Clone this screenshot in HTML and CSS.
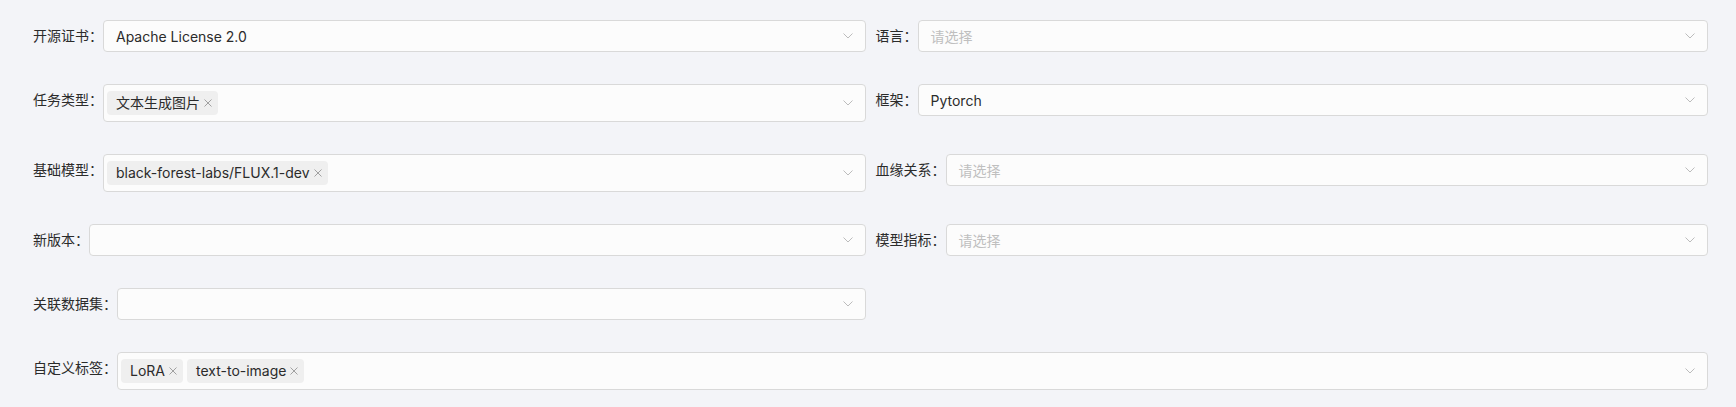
FILE: index.html
```html
<!DOCTYPE html>
<html lang="zh-CN">
<head>
<meta charset="utf-8">
<title>Form</title>
<link rel="stylesheet" href="styles.css">
</head>
<body>
<div class="form">
  <div class="item">
    <span class="label">开源证书：</span>
    <div class="select"><span class="value">Apache License 2.0</span><span class="arrow"><svg viewBox="0 0 10 6" width="10" height="6"><path d="M0.5 0.5 L5 5 L9.5 0.5" fill="none" stroke="#bcbcbc" stroke-width="1"/></svg></span></div>
  </div>
  <div class="item">
    <span class="label">语言：</span>
    <div class="select"><span class="placeholder">请选择</span><span class="arrow"><svg viewBox="0 0 10 6" width="10" height="6"><path d="M0.5 0.5 L5 5 L9.5 0.5" fill="none" stroke="#bcbcbc" stroke-width="1"/></svg></span></div>
  </div>

  <div class="item">
    <span class="label">任务类型：</span>
    <div class="select multi"><div class="tags"><span class="tag">文本生成图片<svg class="close" viewBox="0 0 8 8" width="8" height="8"><path d="M0.5 0.5 L7.5 7.5 M7.5 0.5 L0.5 7.5" stroke="#a0a0a0" stroke-width="1"/></svg></span></div><span class="arrow"><svg viewBox="0 0 10 6" width="10" height="6"><path d="M0.5 0.5 L5 5 L9.5 0.5" fill="none" stroke="#bcbcbc" stroke-width="1"/></svg></span></div>
  </div>
  <div class="item">
    <span class="label">框架：</span>
    <div class="select"><span class="value">Pytorch</span><span class="arrow"><svg viewBox="0 0 10 6" width="10" height="6"><path d="M0.5 0.5 L5 5 L9.5 0.5" fill="none" stroke="#bcbcbc" stroke-width="1"/></svg></span></div>
  </div>

  <div class="item">
    <span class="label">基础模型：</span>
    <div class="select multi"><div class="tags"><span class="tag">black-forest-labs/FLUX.1-dev<svg class="close" viewBox="0 0 8 8" width="8" height="8"><path d="M0.5 0.5 L7.5 7.5 M7.5 0.5 L0.5 7.5" stroke="#a0a0a0" stroke-width="1"/></svg></span></div><span class="arrow"><svg viewBox="0 0 10 6" width="10" height="6"><path d="M0.5 0.5 L5 5 L9.5 0.5" fill="none" stroke="#bcbcbc" stroke-width="1"/></svg></span></div>
  </div>
  <div class="item">
    <span class="label">血缘关系：</span>
    <div class="select"><span class="placeholder">请选择</span><span class="arrow"><svg viewBox="0 0 10 6" width="10" height="6"><path d="M0.5 0.5 L5 5 L9.5 0.5" fill="none" stroke="#bcbcbc" stroke-width="1"/></svg></span></div>
  </div>

  <div class="item">
    <span class="label">新版本：</span>
    <div class="select"><span class="value"></span><span class="arrow"><svg viewBox="0 0 10 6" width="10" height="6"><path d="M0.5 0.5 L5 5 L9.5 0.5" fill="none" stroke="#bcbcbc" stroke-width="1"/></svg></span></div>
  </div>
  <div class="item">
    <span class="label">模型指标：</span>
    <div class="select"><span class="placeholder">请选择</span><span class="arrow"><svg viewBox="0 0 10 6" width="10" height="6"><path d="M0.5 0.5 L5 5 L9.5 0.5" fill="none" stroke="#bcbcbc" stroke-width="1"/></svg></span></div>
  </div>

  <div class="item">
    <span class="label">关联数据集：</span>
    <div class="select"><span class="value"></span><span class="arrow"><svg viewBox="0 0 10 6" width="10" height="6"><path d="M0.5 0.5 L5 5 L9.5 0.5" fill="none" stroke="#bcbcbc" stroke-width="1"/></svg></span></div>
  </div>
  <div class="item empty"></div>

  <div class="item full">
    <span class="label">自定义标签：</span>
    <div class="select multi"><div class="tags"><span class="tag">LoRA<svg class="close" viewBox="0 0 8 8" width="8" height="8"><path d="M0.5 0.5 L7.5 7.5 M7.5 0.5 L0.5 7.5" stroke="#a0a0a0" stroke-width="1"/></svg></span><span class="tag">text-to-image<svg class="close" viewBox="0 0 8 8" width="8" height="8"><path d="M0.5 0.5 L7.5 7.5 M7.5 0.5 L0.5 7.5" stroke="#a0a0a0" stroke-width="1"/></svg></span></div><span class="arrow"><svg viewBox="0 0 10 6" width="10" height="6"><path d="M0.5 0.5 L5 5 L9.5 0.5" fill="none" stroke="#bcbcbc" stroke-width="1"/></svg></span></div>
  </div>
</div>
</body>
</html>
```

FILE: styles.css
```css
html, body {
  margin: 0;
  padding: 0;
  background: #f3f4f8;
}

body {
  font-family: "Inter", "Noto Sans CJK SC", sans-serif;
  font-size: 14px;
  color: #2b2b2b;
}

.form {
  display: grid;
  grid-template-columns: 1fr 1fr;
  column-gap: 10px;
  row-gap: 32px;
  padding: 20px 28px 18px 33px;
  align-items: start;
}

.item {
  display: flex;
  align-items: flex-start;
  min-width: 0;
}

.item.full {
  grid-column: 1 / span 2;
}

.label {
  white-space: nowrap;
  line-height: 32px;
  height: 32px;
  color: #2b2b2b;
}

.select {
  flex: 1;
  min-width: 0;
  box-sizing: border-box;
  height: 32px;
  display: flex;
  align-items: center;
  padding: 0 12px 0 12px;
  border: 1px solid #d9d9d9;
  border-radius: 4px;
  background: #fcfcfc;
}

.select.multi {
  height: 38px;
  padding: 0 12px 0 3px;
}

.value, .placeholder, .tags {
  flex: 1;
  min-width: 0;
  white-space: nowrap;
}

.placeholder {
  color: #bfbfbf;
}

.tags {
  display: flex;
  gap: 4px;
}

.tag {
  display: inline-flex;
  align-items: center;
  height: 24px;
  line-height: 24px;
  padding: 0 6px 0 9px;
  background: #efefef;
  border-radius: 4px;
  color: #2b2b2b;
}

.close {
  margin-left: 4px;
  width: 8px;
  height: 8px;
}

.arrow {
  display: flex;
  align-items: center;
  margin-left: 8px;
}
```
